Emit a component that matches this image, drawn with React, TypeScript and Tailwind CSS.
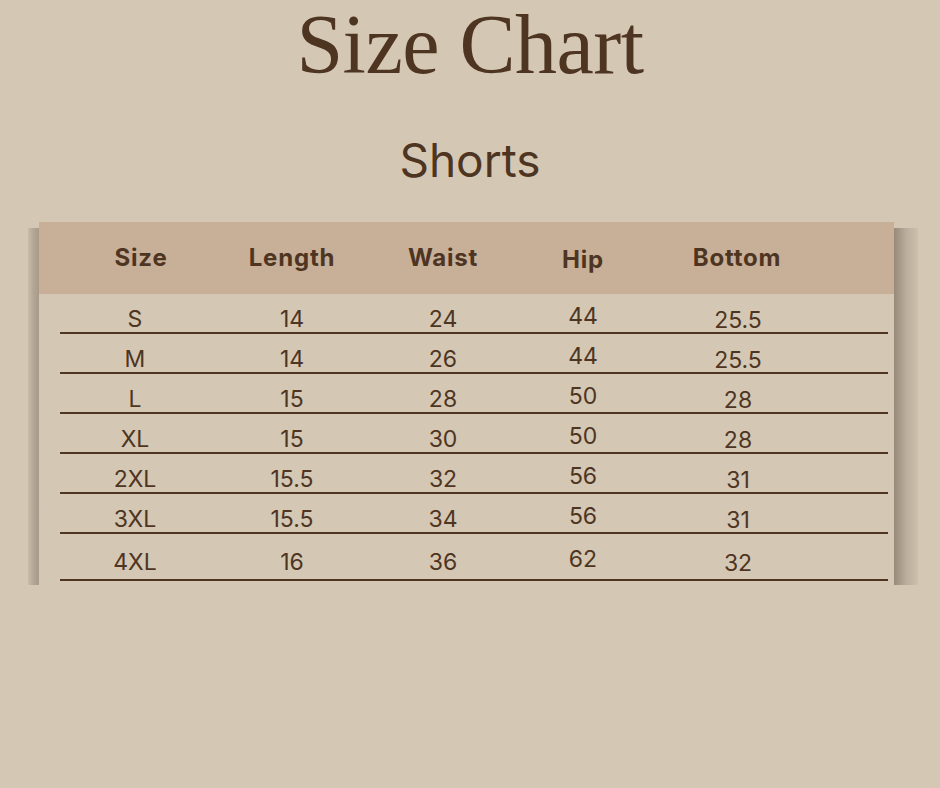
import React from "react";

const rows = [
  ["S", "14", "24", "44", "25.5"],
  ["M", "14", "26", "44", "25.5"],
  ["L", "15", "28", "50", "28"],
  ["XL", "15", "30", "50", "28"],
  ["2XL", "15.5", "32", "56", "31"],
  ["3XL", "15.5", "34", "56", "31"],
  ["4XL", "16", "36", "62", "32"],
];

const colW = ["w-[150px]", "w-[164px]", "w-[138px]", "w-[142px]", "w-[168px]"];

export default function App() {
  return (
    <div
      className="w-[940px] h-[788px] bg-[#d4c7b4] text-[#4e3522] flex flex-col overflow-hidden"
      style={{ fontFamily: "Inter, 'Open Sans', sans-serif" }}
    >
      <div className="flex justify-center">
        <h1
          className="text-[84px] leading-[1.08] tracking-[-0.5px]"
          style={{ fontFamily: "'Liberation Serif', 'Times New Roman', serif" }}
        >
          Size Chart
        </h1>
      </div>
      <div className="flex justify-center mt-[46px]">
        <h2 className="text-[46px] leading-none font-normal">Shorts</h2>
      </div>
      <div className="flex ml-[28px] mt-[39px]">
        <div className="w-[11px] h-[357px] mt-[6px] bg-gradient-to-r from-[#c9bca9] via-[#b3a694] to-[#a89a89]" />
        <div className="w-[855px] flex flex-col">
          <div className="h-[72px] bg-[#c7af98] flex items-center pl-[21px] font-bold text-[24px] tracking-[0.8px]">
            {["Size", "Length", "Waist", "Hip", "Bottom"].map((h, i) => (
              <div key={h} className={`${colW[i]} flex justify-center ${i === 0 ? "pl-[12px]" : ""} ${i === 3 ? "pt-[4px]" : ""} ${i === 4 ? "pr-[2px]" : ""}`}>
                {h}
              </div>
            ))}
          </div>
          <div className="ml-[21px] w-[828px] flex flex-col">
            {rows.map((r, ri) => (
              <div
                key={ri}
                className={`${ri === rows.length - 1 ? "h-[47px]" : "h-[40px]"} border-b-2 border-[#4e3522] flex items-center pt-[13px] text-[23px] leading-none`}
              >
                {r.map((c, ci) => (
                  <div
                    key={ci}
                    className={`${colW[ci]} flex justify-center ${ci === 3 ? "-mt-[6px]" : ""} ${ci === 4 ? "pt-[2px]" : ""}`}
                  >
                    {c}
                  </div>
                ))}
              </div>
            ))}
          </div>
        </div>
        <div className="w-[24px] h-[357px] mt-[6px] bg-gradient-to-r from-[#978a7a] via-[#b9ad9b] to-[#cdc0ad]" />
      </div>
    </div>
  );
}
